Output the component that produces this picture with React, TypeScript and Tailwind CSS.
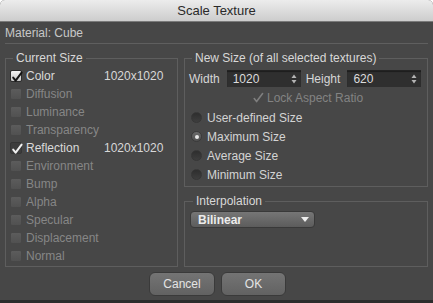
import React from 'react';

type Item = { name: string; value?: string; state: 'on' | 'mixed' | 'off' };

const items: Item[] = [
  { name: 'Color', value: '1020x1020', state: 'on' },
  { name: 'Diffusion', state: 'off' },
  { name: 'Luminance', state: 'off' },
  { name: 'Transparency', state: 'off' },
  { name: 'Reflection', value: '1020x1020', state: 'mixed' },
  { name: 'Environment', state: 'off' },
  { name: 'Bump', state: 'off' },
  { name: 'Alpha', state: 'off' },
  { name: 'Specular', state: 'off' },
  { name: 'Displacement', state: 'off' },
  { name: 'Normal', state: 'off' },
];

const radios = ['User-defined Size', 'Maximum Size', 'Average Size', 'Minimum Size'];

function Check({ color }: { color: string }) {
  return (
    <svg width="12" height="12" viewBox="0 0 12 12" className="absolute left-0 top-0">
      <path d="M2.2 6.6 L4.6 9.6 L10.6 1.6" fill="none" stroke={color} strokeWidth="2" strokeLinecap="round" strokeLinejoin="round" />
    </svg>
  );
}

function CheckBox({ state }: { state: Item['state'] }) {
  if (state === 'on') {
    return (
      <span className="relative w-3 h-3 rounded-[2px] bg-gradient-to-b from-[#f4f4f4] to-[#c4c4c4] border border-[#2e2e2e] shrink-0">
        <Check color="#151515" />
      </span>
    );
  }
  if (state === 'mixed') {
    return (
      <span className="relative w-3 h-3 rounded-[2px] bg-[#3d3d3d] border border-[#353535] shrink-0">
        <Check color="#f0f0f0" />
      </span>
    );
  }
  return <span className="w-3 h-3 rounded-[2px] bg-gradient-to-b from-[#5c5c5c] to-[#515151] border border-[#474747] shrink-0" />;
}

function Spinner() {
  return (
    <svg width="6" height="10" viewBox="0 0 6 10" className="shrink-0">
      <path d="M3 0.5 L5.5 4 L0.5 4 Z" fill="#b4b4b4" />
      <path d="M3 9.5 L5.5 6 L0.5 6 Z" fill="#b4b4b4" />
    </svg>
  );
}

function NumberField({ value }: { value: string }) {
  return (
    <div className="w-[74px] h-[17px] flex items-center justify-between pl-[6px] pr-[4px] bg-[#2f2f2f] border-t border-[#232323] shadow-[inset_0_1px_1px_rgba(0,0,0,0.4)] text-[#dcdcdc]">
      <span>{value}</span>
      <Spinner />
    </div>
  );
}

export default function App() {
  return (
    <div className="w-[433px] h-[303px] bg-white" style={{ fontFamily: '"Liberation Sans", Arial, sans-serif' }}>
      <div className="h-full flex flex-col rounded-t-[5px] overflow-hidden bg-[#474747] border-b-[3px] border-[#2c2c2c] text-[12px] leading-[14px]">
        <div className="h-[22px] shrink-0 flex items-center justify-center bg-gradient-to-b from-[#ececec] to-[#cdcdcd] border-b border-[#7a7a7a] text-[13px] text-[#2a2a2a]">
          Scale Texture
        </div>

        <div className="px-[5px] flex flex-col flex-1">
          <div className="h-[21px] flex items-center text-[#c8c8c8]">Material: Cube</div>
          <div className="h-px bg-[#5f5f5f]" />

          <div className="flex gap-[6px] mt-[7px]">
            <fieldset className="w-[173px] border border-[#5e5e5e] pl-[4px] pt-[2px] pb-[1px]">
              <legend className="ml-[3px] px-[3px] text-[#d8d8d8]">Current Size</legend>
              {items.map(it => (
                <div key={it.name} className="h-[18px] flex items-center">
                  <CheckBox state={it.state} />
                  <span className={`ml-[4px] w-[78px] ${it.state === 'off' ? 'text-[#868686]' : 'text-[#dadada]'}`}>{it.name}</span>
                  {it.value && <span className="text-[#d8d8d8]">{it.value}</span>}
                </div>
              ))}
            </fieldset>

            <div className="flex-1 flex flex-col">
              <fieldset className="border border-[#5e5e5e] pl-[4px] pt-[5px] pb-[2px]">
                <legend className="ml-[3px] px-[3px] text-[#d8d8d8]">New Size (of all selected textures)</legend>
                <div className="flex items-center h-[17px]">
                  <span className="text-[#d6d6d6]">Width</span>
                  <span className="ml-[7px]"><NumberField value="1020" /></span>
                  <span className="ml-[5px] text-[#d6d6d6]">Height</span>
                  <span className="ml-[7px]"><NumberField value="620" /></span>
                </div>
                <div className="h-[21px] flex items-center pl-[63px] text-[#838383]">
                  <svg width="12" height="12" viewBox="0 0 12 12" className="shrink-0">
                    <path d="M2.2 6.6 L4.6 9.6 L10.6 1.6" fill="none" stroke="#7e7e7e" strokeWidth="1.6" strokeLinecap="round" strokeLinejoin="round" />
                  </svg>
                  <span className="ml-[3px]">Lock Aspect Ratio</span>
                </div>
                {radios.map((r, i) => (
                  <div key={r} className="h-[19px] flex items-center pl-[2px]">
                    {i === 1 ? (
                      <span className="w-[11px] h-[11px] rounded-full bg-gradient-to-b from-[#6a6a6a] to-[#505050] border border-[#3a3a3a] flex items-center justify-center shrink-0">
                        <span className="w-[4px] h-[4px] rounded-full bg-[#e8e8e8]" />
                      </span>
                    ) : (
                      <span className="w-[11px] h-[11px] rounded-full bg-gradient-to-b from-[#2e2e2e] to-[#3e3e3e] border border-[#363636] shrink-0" />
                    )}
                    <span className="ml-[5px] text-[#d4d4d4]">{r}</span>
                  </div>
                ))}
              </fieldset>

              <fieldset className="flex-1 mt-[7px] border border-[#5e5e5e] pl-[5px] pt-[3px]">
                <legend className="ml-[3px] px-[3px] text-[#d8d8d8]">Interpolation</legend>
                <div className="w-[125px] h-[17px] flex items-center justify-between pl-[7px] pr-[5px] rounded-[4px] bg-gradient-to-b from-[#767676] to-[#5c5c5c] border border-[#393939] text-[#ececec] font-bold">
                  <span>Bilinear</span>
                  <svg width="8" height="5" viewBox="0 0 8 5">
                    <path d="M0 0 L8 0 L4 5 Z" fill="#ededed" />
                  </svg>
                </div>
              </fieldset>
            </div>
          </div>

          <div className="flex justify-center gap-[6px] mt-[5px] pl-[2px]">
            <button className="w-[66px] h-[24px] rounded-[6px] bg-gradient-to-b from-[#747474] to-[#626262] border border-[#3a3a3a] text-[#e4e4e4]">Cancel</button>
            <button className="w-[65px] h-[24px] rounded-[6px] bg-gradient-to-b from-[#747474] to-[#626262] border border-[#3a3a3a] text-[#e4e4e4]">OK</button>
          </div>
        </div>
      </div>
    </div>
  );
}
